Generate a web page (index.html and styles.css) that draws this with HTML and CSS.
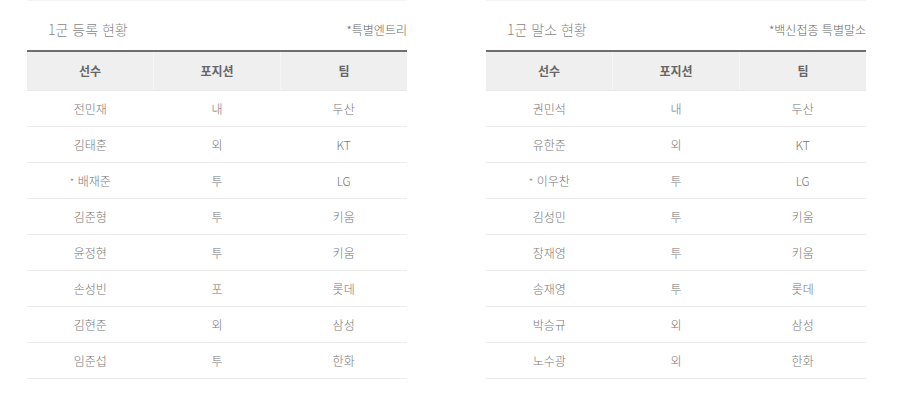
FILE: index.html
```html
<!DOCTYPE html>
<html lang="ko">
  <head>
    <meta charset="UTF-8" />
    <title>1군 등록 / 말소 현황</title>
    <link rel="stylesheet" href="styles.css">
  </head>
  <body>
    <div class="boards">
      <section class="board">
        <div class="board-head">
          <h2 class="board-title">1군 등록 현황</h2>
          <span class="board-note">*특별엔트리</span>
        </div>
        <table class="roster">
          <thead>
            <tr><th>선수</th><th>포지션</th><th>팀</th></tr>
          </thead>
          <tbody>
            <tr><td>전민재</td><td>내</td><td>두산</td></tr>
            <tr><td>김태훈</td><td>외</td><td>KT</td></tr>
            <tr><td><span class="mark">*</span> 배재준</td><td>투</td><td>LG</td></tr>
            <tr><td>김준형</td><td>투</td><td>키움</td></tr>
            <tr><td>윤정현</td><td>투</td><td>키움</td></tr>
            <tr><td>손성빈</td><td>포</td><td>롯데</td></tr>
            <tr><td>김현준</td><td>외</td><td>삼성</td></tr>
            <tr><td>임준섭</td><td>투</td><td>한화</td></tr>
          </tbody>
        </table>
      </section>

      <section class="board">
        <div class="board-head">
          <h2 class="board-title">1군 말소 현황</h2>
          <span class="board-note">*백신접종 특별말소</span>
        </div>
        <table class="roster">
          <thead>
            <tr><th>선수</th><th>포지션</th><th>팀</th></tr>
          </thead>
          <tbody>
            <tr><td>권민석</td><td>내</td><td>두산</td></tr>
            <tr><td>유한준</td><td>외</td><td>KT</td></tr>
            <tr><td><span class="mark">*</span> 이우찬</td><td>투</td><td>LG</td></tr>
            <tr><td>김성민</td><td>투</td><td>키움</td></tr>
            <tr><td>장재영</td><td>투</td><td>키움</td></tr>
            <tr><td>송재영</td><td>투</td><td>롯데</td></tr>
            <tr><td>박승규</td><td>외</td><td>삼성</td></tr>
            <tr><td>노수광</td><td>외</td><td>한화</td></tr>
          </tbody>
        </table>
      </section>
    </div>
  </body>
</html>
```

FILE: styles.css
```css
* {
  margin: 0;
  padding: 0;
  box-sizing: border-box;
}

body {
  font-family: "Noto Sans CJK KR", "Noto Sans", sans-serif;
  background-color: #fff;
  color: #777;
}

.boards {
  display: flex;
  gap: 79px;
  padding-left: 27px;
}

.board {
  width: 380px;
  border-top: 1px solid #f4f4f4;
}

.board-head {
  height: 49px;
  display: flex;
  justify-content: space-between;
  align-items: center;
  padding: 7px 0 0 21px;
}

.board-title {
  font-size: 14px;
  font-weight: 300;
  color: #888;
}

.board-note {
  font-size: 12px;
  font-weight: 300;
  color: #666;
}

.roster {
  width: 100%;
  border-collapse: collapse;
  table-layout: fixed;
  border-top: 2px solid #6e6e6e;
}

.roster th {
  height: 39px;
  background-color: #efefef;
  font-size: 12px;
  font-weight: 700;
  color: #666;
  border-bottom: 1px solid #e8e8e8;
}

.roster th + th {
  border-left: 1px solid #f6f6f6;
}

.roster td {
  height: 36px;
  text-align: center;
  font-size: 12px;
  font-weight: 300;
  color: #777;
  border-bottom: 1px solid #ececec;
}

.mark {
  font-size: 10px;
  color: #888;
}
```
